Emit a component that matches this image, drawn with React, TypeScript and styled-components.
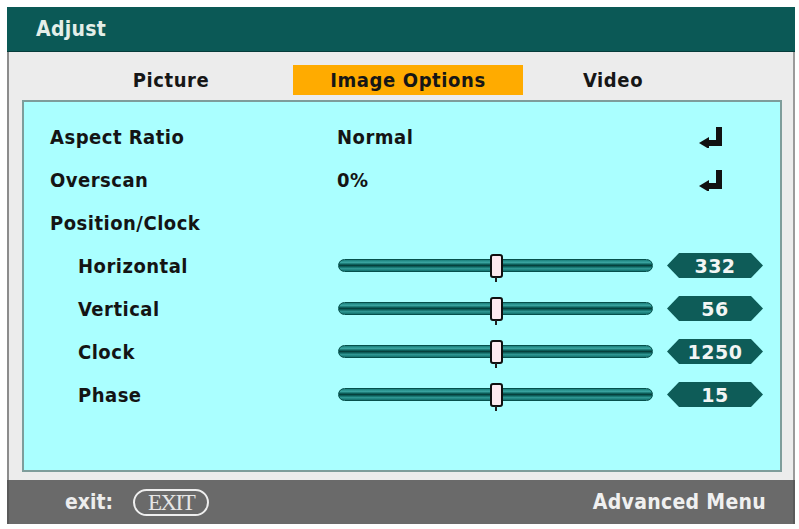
import styled, { createGlobalStyle } from 'styled-components'

const GlobalStyle = createGlobalStyle`
  body {
    margin: 0;
    background: #ffffff;
    font-family: "DejaVu Sans Condensed", "DejaVu Sans", sans-serif;
    font-stretch: condensed;
  }
`

// ---- Styled Components ----
const Frame = styled.div`
  margin: 7px 0 0 7px;
  width: 788px;
  height: 517px;
  display: flex;
  flex-direction: column;
  box-sizing: border-box;
`

const TitleBar = styled.div`
  height: 45px;
  flex-shrink: 0;
  background: #0b5956;
  color: #e4eee8;
  font-weight: 700;
  font-size: 21px;
  letter-spacing: 0.3px;
  display: flex;
  align-items: center;
  padding-left: 29px;
  border-bottom: 1px solid #063c3a;
  box-sizing: border-box;
`

const Body = styled.div`
  flex: 1;
  display: flex;
  flex-direction: column;
  background: #ececec;
  border-left: 2px solid #8c8c8c;
  border-right: 2px solid #9a9a9a;
  padding: 0 11px 8px 13px;
`

const TabBar = styled.div`
  display: grid;
  grid-template-columns: 244px 230px 180px;
  padding: 13px 0 5px 27px;
`

const Tab = styled.div<{ $active?: boolean }>`
  height: 30px;
  display: flex;
  align-items: center;
  justify-content: center;
  font-weight: 700;
  font-size: 20px;
  letter-spacing: 0.6px;
  color: #161616;
  background: ${({ $active }) => ($active ? '#ffab00' : 'transparent')};
`

const Panel = styled.div`
  flex: 1;
  background: #aaffff;
  border: 2px solid #7e9d9b;
  padding: 13px 0 0 26px;
`

const Row = styled.div`
  display: grid;
  grid-template-columns: 287px 316px 1fr;
  align-items: center;
  height: 43px;
`

const Label = styled.div<{ $indent?: boolean }>`
  font-weight: 700;
  font-size: 20px;
  letter-spacing: 0.5px;
  color: #141414;
  padding-left: ${({ $indent }) => ($indent ? '28px' : '0')};
`

const Value = styled.div`
  font-weight: 700;
  font-size: 20px;
  letter-spacing: 0.5px;
  color: #141414;
`

const EnterCell = styled.div`
  padding-left: 46px;
  display: flex;
  align-items: center;
`

const SliderBox = styled.div`
  position: relative;
  height: 26px;
  display: flex;
  align-items: center;
  padding-left: 1px;
`

const Track = styled.div`
  width: 315px;
  height: 13px;
  border-radius: 7px;
  box-sizing: border-box;
  border: 1px solid #06504c;
  background: linear-gradient(
    to bottom,
    #1a7f7b 0%,
    #3aa5a1 22%,
    #0c5f5b 40%,
    #063f3c 50%,
    #0c5f5b 60%,
    #2f9894 78%,
    #12706c 100%
  );
`

const Thumb = styled.div`
  position: absolute;
  top: 1px;
  width: 9px;
  height: 20px;
  margin-left: -5px;
  background: #fde9ef;
  border: 2px solid #101010;
  border-radius: 3px;

  &::after {
    content: '';
    position: absolute;
    left: 3px;
    top: 21px;
    width: 2px;
    height: 5px;
    background: #202020;
  }
`

const Badge = styled.div`
  margin-left: 14px;
  width: 96px;
  height: 25px;
  background: #0e5c58;
  color: #f2f5f4;
  font-family: "DejaVu Sans", sans-serif;
  font-stretch: normal;
  font-weight: 700;
  font-size: 19px;
  display: flex;
  align-items: center;
  justify-content: center;
  letter-spacing: 0.5px;
  clip-path: polygon(12px 0, calc(100% - 12px) 0, 100% 50%, calc(100% - 12px) 100%, 12px 100%, 0 50%);
`

const Footer = styled.div`
  height: 44px;
  flex-shrink: 0;
  background: #6a6a6a;
  border-left: 2px solid #5a5a5a;
  border-right: 2px solid #5a5a5a;
  display: flex;
  align-items: center;
  padding: 0 27px 0 56px;
`

const ExitLabel = styled.span`
  font-weight: 700;
  font-size: 21px;
  color: #ededed;
`

const ExitPill = styled.span`
  margin-left: 20px;
  width: 72px;
  height: 23px;
  border: 2px solid #efefef;
  border-radius: 14px;
  display: flex;
  align-items: center;
  justify-content: center;
  font-family: "Liberation Serif", serif;
  font-size: 23px;
  line-height: 1;
  color: #e6e6e6;
  letter-spacing: -1.5px;
`

const FooterRight = styled.span`
  margin-left: auto;
  font-weight: 700;
  font-size: 21px;
  letter-spacing: 0.3px;
  color: #f0f0f0;
`

// ---- Data ----
const SLIDERS = [
  { label: 'Horizontal', value: '332', pos: 50 },
  { label: 'Vertical', value: '56', pos: 50 },
  { label: 'Clock', value: '1250', pos: 50 },
  { label: 'Phase', value: '15', pos: 50 },
]

const EnterIcon = () => (
  <svg width="24" height="22" viewBox="0 0 24 22">
    <path d="M17 1h6v19H9v-6h8z" fill="#111" />
    <path d="M0 17L10 11v12z" fill="#111" />
  </svg>
)

// ---- Component ----
export default function App() {
  return (
    <>
      <GlobalStyle />
      <Frame>
        <TitleBar>Adjust</TitleBar>
        <Body>
          <TabBar>
            <Tab>Picture</Tab>
            <Tab $active>Image Options</Tab>
            <Tab>Video</Tab>
          </TabBar>
          <Panel>
            <Row>
              <Label>Aspect Ratio</Label>
              <Value>Normal</Value>
              <EnterCell>
                <EnterIcon />
              </EnterCell>
            </Row>
            <Row>
              <Label>Overscan</Label>
              <Value>0%</Value>
              <EnterCell>
                <EnterIcon />
              </EnterCell>
            </Row>
            <Row>
              <Label>Position/Clock</Label>
            </Row>
            {SLIDERS.map((s) => (
              <Row key={s.label}>
                <Label $indent>{s.label}</Label>
                <SliderBox>
                  <Track />
                  <Thumb style={{ left: `${s.pos}%` }} />
                </SliderBox>
                <Badge>{s.value}</Badge>
              </Row>
            ))}
          </Panel>
        </Body>
        <Footer>
          <ExitLabel>exit:</ExitLabel>
          <ExitPill>EXIT</ExitPill>
          <FooterRight>Advanced Menu</FooterRight>
        </Footer>
      </Frame>
    </>
  )
}
